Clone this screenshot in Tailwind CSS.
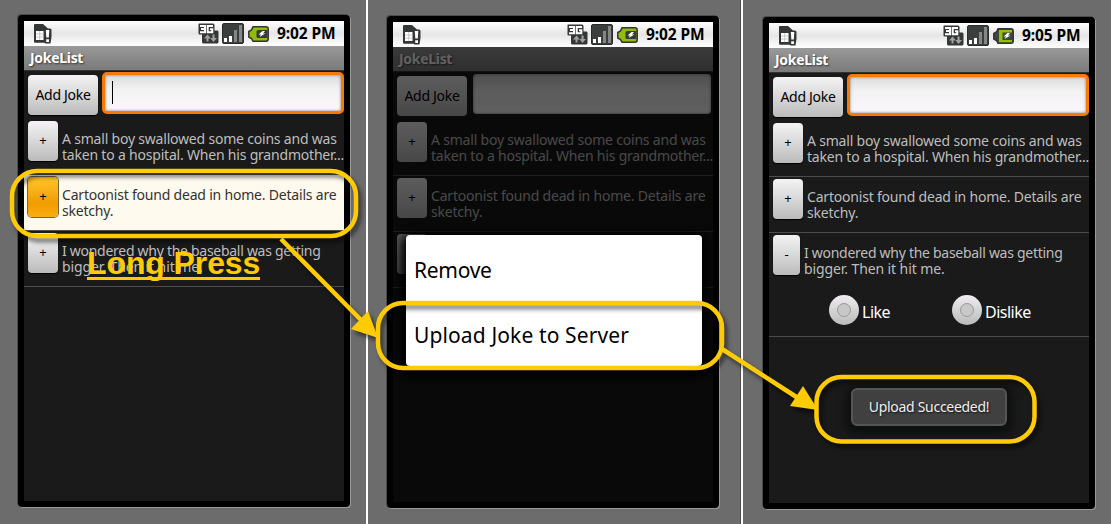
<!DOCTYPE html>
<html lang="en">
<head>
<meta charset="utf-8">
<title>JokeList</title>
<script src="https://cdn.jsdelivr.net/npm/@tailwindcss/browser@4"></script>
</head>
<body class="relative h-[524px] w-[1111px] overflow-hidden bg-[#6c6c6c] font-['Noto_Sans',sans-serif] text-[14px] whitespace-nowrap">
<svg class="hidden">
  <symbol id="sim" viewBox="0 0 18 20">
    <path d="M0 1Q0 0 1 0H9L14 4.500H16Q17.500 4.500 17.500 6V13L16.500 19.500H11.500L10.500 18.800H1Q0 18.800 0 17.500Z" fill="#353737"/>
    <path d="M2 7H9.500V16H2Z" fill="#fff"/><path d="M2 10H9.500M2 13H9.500M5.700 7V16" stroke="#b5b5b5" stroke-width=".7"/>
    <path d="M11.800 6H15.300L14.800 13.500H12.300ZM12.200 15.300H15V18H12.200Z" fill="#fff"/>
  </symbol>
  <symbol id="net" viewBox="0 0 21 21">
    <path d="M1 .5H15Q16.500 .5 16.500 2V7.500H19.500Q20.500 7.500 20.500 9V19Q20.500 20.500 19 20.500H5.500Q4 20.500 4 19V11.500H1.500Q.5 11.500 .5 10.500V1Z" fill="#353737"/>
    <path d="M2 3H7V9.200H2M3 6H7M15 3H9.700V9.200H14.300V6.300H12" fill="none" stroke="#fff" stroke-width="2"/>
    <path d="M9.500 11.500L6 15.500H8.500V18.500H10.500V15.500H13ZM15.500 19L12.200 15H14.500V11.500H16.600V15H19Z" fill="#a0a0a0"/>
  </symbol>
  <symbol id="signal" viewBox="0 0 22 21">
    <rect x=".5" y=".5" width="21" height="20" rx="1.500" fill="#3c3e3e" stroke="#2a2c2c"/>
    <path d="M2 15h3v4H2zM7 13h3v6H7z" fill="#fff"/><path d="M12 7h3v12h-3zM17 2h3v17h-3z" fill="#858787"/>
  </symbol>
  <symbol id="battery" viewBox="0 0 21 16">
    <path d="M5 .8H18Q20.200 .8 20.200 3V13Q20.200 15.200 18 15.200H5L3.500 12.500L.8 11V5.500L3.500 4Z" fill="#91bd08" stroke="#333" stroke-width="1.500"/>
    <path d="M10 4H19.500V12H10Q8.500 12 8.500 10.500V5.500Q8.500 4 10 4Z" fill="#373a38"/><path d="M14.500 5L10.500 8.500H13L11.500 11L17.500 7.500H15L17 5Z" fill="#fff"/>
  </symbol>
  <symbol id="batteryLow" viewBox="0 0 21 16">
    <path d="M5 .8H18Q20.200 .8 20.200 3V13Q20.200 15.200 18 15.200H5L3.500 12.500L.8 11V5.500L3.500 4Z" fill="#414441" stroke="#333" stroke-width="1.500"/>
    <path d="M6 2H19V4.500H9.500V12H19V14.300H6Z" fill="#91c000"/><path d="M14.500 5L10.500 8.500H13L11.500 11L17.500 7.500H15L17 5Z" fill="#fff"/>
  </symbol>
</svg>

<main class="grid h-full grid-cols-[366px_374px_371px]">
  <!-- Joke list with a long-pressed row -->
  <section class="pl-[18px] pt-[15px]">
    <div class="h-[492px] w-[332px] rounded-[4px] border-6 border-black bg-[#1a1a1a] shadow-[1px_1px_0_#999,-1px_-1px_0_#4c4c4c]">
      <header class="flex h-[25px] items-center bg-linear-to-b from-white via-[#e6e6e6] to-white pr-[7px] pl-[10px]">
        <svg class="mr-auto h-5 w-[18px]"><use href="#sim"/></svg>
        <svg class="mr-[3px] h-[21px] w-[21px]"><use href="#net"/></svg>
        <svg class="mr-[4px] h-[21px] w-[22px]"><use href="#signal"/></svg>
        <svg class="mr-[8px] h-4 w-[21px]"><use href="#battery"/></svg>
        <time class="w-[60px] pt-px text-[15.500px] font-bold tracking-[-0.100px]">9:02 PM</time>
      </header>
      <h1 class="h-[25px] border-b border-[#333] bg-linear-to-b from-[#999] to-[#7b7b7b] pl-[6px] text-[14px]/[24px] font-bold tracking-[-0.300px] text-white [text-shadow:1px_1px_2px_#333]">JokeList</h1>
      <div class="flex h-[48px] pt-[1px] pl-[4px]">
        <button class="mt-[3px] h-10 w-[70px] rounded-[4px] bg-linear-to-b from-[#f5f3f5] via-[#d8d8d8] via-50% to-[#bbb] pb-[2px] tracking-[-0.300px] shadow-[0_1px_1px_#000]">Add Joke</button>
        <div class="ml-[4px] h-[42px] w-[242px] rounded-[5px] border-3 border-[#f77a06] bg-linear-to-b from-[#dcdcdc] via-[#f3f2f3] via-40% to-[#faf8fa] pt-[6px] pl-[7px] shadow-[inset_0_0_3px_#777]"><div class="h-[23px] w-px bg-black"></div></div>
      </div>
      <div class="flex h-[56px] gap-[4px] border-b border-[#4c4c4c] pt-[2px] pl-[4px]">
        <button class="h-10 w-[30px] shrink-0 rounded-[4px] bg-linear-to-b from-[#f5f3f5] via-[#d8d8d8] via-50% to-[#bbb] text-[13px] shadow-[0_1px_1px_#000]">+</button>
        <p class="pt-[10px] leading-[16px] tracking-[-0.200px] text-[#bebebe]">A small boy swallowed some coins and was<br>taken to a hospital. When his grandmother...</p>
      </div>
      <div class="flex h-[56px] gap-[4px] border-b border-[#4c4c4c] bg-[#fffaed] pt-[2px] pl-[4px]">
        <button class="h-10 w-[30px] shrink-0 rounded-[4px] bg-linear-to-b from-[#ffc629] via-[#f09c00] via-65% to-[#f9ad12] text-[13px] shadow-[0_0_0_1px_#716548]">+</button>
        <p class="pt-[10px] leading-[16px] tracking-[-0.200px] text-[#333]">Cartoonist found dead in home. Details are<br>sketchy.</p>
      </div>
      <div class="flex h-[56px] gap-[4px] border-b border-[#4c4c4c] pt-[2px] pl-[4px]">
        <button class="h-10 w-[30px] shrink-0 rounded-[4px] bg-linear-to-b from-[#f5f3f5] via-[#d8d8d8] via-50% to-[#bbb] text-[13px] shadow-[0_1px_1px_#000]">+</button>
        <p class="pt-[10px] leading-[16px] tracking-[-0.280px] text-[#bebebe]">I wondered why the baseball was getting<br><span class="tracking-[-0.100px]">bigger. Then it hit me.</span></p>
      </div>
    </div>
  </section>

  <!-- Context menu -->
  <section class="border-l-2 border-white pt-[16px] pl-[19px]">
    <div class="relative h-[492px] w-[332px] rounded-[4px] border-6 border-black bg-[#1a1a1a] shadow-[1px_1px_0_#999,-1px_-1px_0_#4c4c4c]">
      <header class="flex h-[25px] items-center bg-linear-to-b from-white via-[#e6e6e6] to-white pr-[7px] pl-[10px]">
        <svg class="mr-auto h-5 w-[18px]"><use href="#sim"/></svg>
        <svg class="mr-[3px] h-[21px] w-[21px]"><use href="#net"/></svg>
        <svg class="mr-[4px] h-[21px] w-[22px]"><use href="#signal"/></svg>
        <svg class="mr-[8px] h-4 w-[21px]"><use href="#battery"/></svg>
        <time class="w-[60px] pt-px text-[15.500px] font-bold tracking-[-0.100px]">9:02 PM</time>
      </header>
      <h1 class="h-[25px] border-b border-[#333] bg-linear-to-b from-[#999] to-[#7b7b7b] pl-[6px] text-[14px]/[24px] font-bold tracking-[-0.300px] text-white [text-shadow:1px_1px_2px_#333]">JokeList</h1>
      <div class="flex h-[48px] pt-[1px] pl-[4px]">
        <button class="mt-[3px] h-10 w-[70px] rounded-[4px] bg-linear-to-b from-[#f5f3f5] via-[#d8d8d8] via-50% to-[#bbb] pb-[2px] tracking-[-0.300px]">Add Joke</button>
        <div class="mt-px ml-[6px] h-[40px] w-[238px] rounded-[4px] bg-linear-to-b from-[#d0d0d0] via-[#f3f2f3] via-40% to-[#faf8fa] shadow-[inset_0_0_3px_#777]"></div>
      </div>
      <div class="flex h-[56px] gap-[4px] border-b border-[#4c4c4c] pt-[2px] pl-[4px]">
        <button class="h-10 w-[30px] shrink-0 rounded-[4px] bg-linear-to-b from-[#f5f3f5] via-[#d8d8d8] via-50% to-[#bbb] text-[13px]">+</button>
        <p class="pt-[10px] leading-[16px] tracking-[-0.200px] text-[#bebebe]">A small boy swallowed some coins and was<br>taken to a hospital. When his grandmother...</p>
      </div>
      <div class="flex h-[56px] gap-[4px] border-b border-[#4c4c4c] pt-[2px] pl-[4px]">
        <button class="h-10 w-[30px] shrink-0 rounded-[4px] bg-linear-to-b from-[#f5f3f5] via-[#d8d8d8] via-50% to-[#bbb] text-[13px]">+</button>
        <p class="pt-[10px] leading-[16px] tracking-[-0.200px] text-[#bebebe]">Cartoonist found dead in home. Details are<br>sketchy.</p>
      </div>
      <div class="flex h-[56px] gap-[4px] border-b border-[#4c4c4c] pt-[2px] pl-[4px]">
        <button class="h-10 w-[30px] shrink-0 rounded-[4px] bg-linear-to-b from-[#f5f3f5] via-[#d8d8d8] via-50% to-[#bbb]"></button>
      </div>
      <div class="absolute inset-x-0 top-[25px] bottom-0 bg-black/62"></div>
      <div class="absolute top-[213px] left-[13px] flex h-[131px] w-[296px] flex-col rounded-[4px] bg-white pl-[8px] text-[21px] shadow-[0_4px_10px_5px_#000]">
        <div class="flex h-[65px] items-center pt-[7px]"><span class="tracking-[-0.300px]">Remove</span></div>
        <div class="flex h-[65px] items-center pt-[7px]"><span class="tracking-[0.120px]">Upload Joke to Server</span></div>
      </div>
    </div>
  </section>

  <!-- Upload confirmation -->
  <section class="border-l border-[#4c4c4c]">
    <div class="h-full border-l-2 border-white pt-[17px] pl-[20px]">
    <div class="relative h-[492px] w-[332px] rounded-[4px] border-6 border-black bg-[#1a1a1a] shadow-[1px_1px_0_#999,-1px_-1px_0_#4c4c4c]">
      <header class="flex h-[25px] items-center bg-linear-to-b from-white via-[#e6e6e6] to-white pr-[7px] pl-[10px]">
        <svg class="mr-auto h-5 w-[18px]"><use href="#sim"/></svg>
        <svg class="mr-[3px] h-[21px] w-[21px]"><use href="#net"/></svg>
        <svg class="mr-[4px] h-[21px] w-[22px]"><use href="#signal"/></svg>
        <svg class="mr-[8px] h-4 w-[21px]"><use href="#batteryLow"/></svg>
        <time class="w-[60px] pt-px text-[15.500px] font-bold tracking-[-0.100px]">9:05 PM</time>
      </header>
      <h1 class="h-[25px] border-b border-[#333] bg-linear-to-b from-[#999] to-[#7b7b7b] pl-[6px] text-[14px]/[24px] font-bold tracking-[-0.300px] text-white [text-shadow:1px_1px_2px_#333]">JokeList</h1>
      <div class="flex h-[48px] pt-[1px] pl-[4px]">
        <button class="mt-[3px] h-10 w-[70px] rounded-[4px] bg-linear-to-b from-[#f5f3f5] via-[#d8d8d8] via-50% to-[#bbb] pb-[2px] tracking-[-0.300px] shadow-[0_1px_1px_#000]">Add Joke</button>
        <div class="ml-[4px] h-[42px] w-[242px] rounded-[5px] border-3 border-[#f77a06] bg-linear-to-b from-[#dcdcdc] via-[#f3f2f3] via-40% to-[#faf8fa] shadow-[inset_0_0_3px_#777]"></div>
      </div>
      <div class="flex h-[56px] gap-[4px] border-b border-[#4c4c4c] pt-[2px] pl-[4px]">
        <button class="h-10 w-[30px] shrink-0 rounded-[4px] bg-linear-to-b from-[#f5f3f5] via-[#d8d8d8] via-50% to-[#bbb] text-[13px] shadow-[0_1px_1px_#000]">+</button>
        <p class="pt-[10px] leading-[16px] tracking-[-0.200px] text-[#bebebe]">A small boy swallowed some coins and was<br>taken to a hospital. When his grandmother...</p>
      </div>
      <div class="flex h-[56px] gap-[4px] border-b border-[#4c4c4c] pt-[2px] pl-[4px]">
        <button class="h-10 w-[30px] shrink-0 rounded-[4px] bg-linear-to-b from-[#f5f3f5] via-[#d8d8d8] via-50% to-[#bbb] text-[13px] shadow-[0_1px_1px_#000]">+</button>
        <p class="pt-[10px] leading-[16px] tracking-[-0.200px] text-[#bebebe]">Cartoonist found dead in home. Details are<br>sketchy.</p>
      </div>
      <div class="h-[104px] border-b border-[#4c4c4c] pt-[2px] pl-[4px]">
        <div class="flex h-[60px] gap-[4px]">
          <button class="h-10 w-[27px] shrink-0 rounded-[4px] bg-linear-to-b from-[#f5f3f5] via-[#d8d8d8] via-50% to-[#bbb] text-[13px] shadow-[0_1px_1px_#000]">-</button>
          <p class="pt-[10px] leading-[16px] tracking-[-0.280px] text-[#bebebe]">I wondered why the baseball was getting<br><span class="tracking-[-0.100px]">bigger. Then it hit me.</span></p>
        </div>
        <div class="flex pl-[56px] text-[16px] tracking-[-0.500px] text-white">
          <label class="flex w-[123px] items-center gap-[3px]"><span class="flex size-[30px] items-center justify-center rounded-full bg-linear-to-b from-[#f0eef0] to-[#bbb]"><span class="size-[14px] rounded-full border border-[#999] bg-[#c8c8c8]"></span></span><span class="pt-[4px]">Like</span></label>
          <label class="flex items-center gap-[3px]"><span class="flex size-[30px] items-center justify-center rounded-full bg-linear-to-b from-[#f0eef0] to-[#bbb]"><span class="size-[14px] rounded-full border border-[#999] bg-[#c8c8c8]"></span></span><span class="pt-[4px]">Dislike</span></label>
        </div>
      </div>
      <div class="absolute top-[365px] left-[82px] flex h-[38px] w-[156px] items-center justify-center rounded-[6px] border-2 border-[#555] bg-[#404040] pb-[2px] tracking-[-0.300px] text-[#eee] shadow-[0_3px_9px_6px_#0e110f] [text-shadow:1px_1px_2px_#111]">Upload Succeeded!</div>
    </div>
    </div>
  </section>
</main>

<!-- Callout rings and arrows -->
<svg class="absolute inset-0 h-[524px] w-[1111px] drop-shadow-[3px_4px_2px_#00000088]" fill="none" stroke="#ffcb05" stroke-width="4.500">
  <rect x="12" y="171" width="344" height="65" rx="25"/>
  <rect x="378" y="303" width="344" height="65" rx="25"/>
  <rect x="816.500" y="377" width="218" height="64.500" rx="25"/>
  <path d="M281 239L363 322M722 349L798 398"/>
  <path d="M378 338L351 329L368 311ZM818 410L790 406L803 386Z" fill="#ffcb05" stroke="none"/>
</svg>
<div class="absolute top-[244px] left-[87px] h-[36px] w-[173px] border-b-[3px] border-[#ffcb05] pt-[3px] font-['Liberation_Sans',sans-serif] text-[32px]/[33px] font-bold tracking-[-0.100px] text-[#ffcb05]">Long Press</div>
</body>
</html>
